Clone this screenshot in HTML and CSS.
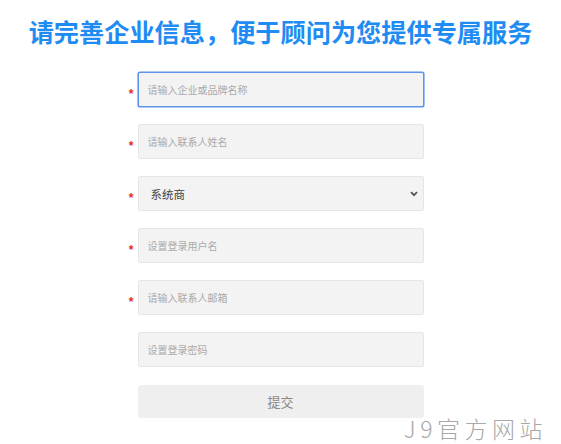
FILE: index.html
```html
<!DOCTYPE html>
<html lang="zh-CN">
<head>
<meta charset="utf-8">
<title>完善企业信息</title>
<link rel="stylesheet" href="styles.css">
</head>
<body>
<div class="page">
  <h1 class="title">请完善企业信息，便于顾问为您提供专属服务</h1>
  <form class="form">
    <span class="star">*</span>
    <input class="field focused" type="text" placeholder="请输入企业或品牌名称">
    <span class="spacer"></span>

    <span class="star">*</span>
    <input class="field" type="text" placeholder="请输入联系人姓名">
    <span class="spacer"></span>

    <span class="star">*</span>
    <div class="select-wrap">
      <select class="field select">
        <option>系统商</option>
      </select>
      <svg class="chevron" width="8" height="6" viewBox="0 0 8 6"><path d="M1 1.2 L4 4.2 L7 1.2" fill="none" stroke="#555" stroke-width="1.8"/></svg>
    </div>
    <span class="spacer"></span>

    <span class="star">*</span>
    <input class="field" type="text" placeholder="设置登录用户名">
    <span class="spacer"></span>

    <span class="star">*</span>
    <input class="field" type="text" placeholder="请输入联系人邮箱">
    <span class="spacer"></span>

    <span class="nostar"></span>
    <input class="field" type="password" placeholder="设置登录密码">
    <span class="spacer"></span>

    <span class="nostar"></span>
    <button class="submit" type="button">提交</button>
    <span class="spacer"></span>
  </form>
  <div class="watermark">J9官方网站</div>
</div>
</body>
</html>
```

FILE: styles.css
```css
html, body {
  margin: 0;
  padding: 0;
  background: #ffffff;
}
body {
  font-family: "Noto Sans CJK SC", "Noto Sans", "DejaVu Sans", sans-serif;
}
.page {
  position: relative;
  width: 561px;
  height: 444px;
  overflow: hidden;
}
.title {
  margin: 0;
  padding-top: 16px;
  height: 30px;
  line-height: 30px;
  text-align: center;
  font-size: 25.2px;
  font-weight: 700;
  color: #1e8cf2;
  letter-spacing: 0;
}
.form {
  margin-top: 26px;
  display: grid;
  grid-template-columns: 1fr 286px 1fr;
  row-gap: 17px;
}
.star {
  justify-self: end;
  align-self: center;
  padding-right: 4px;
  padding-top: 8px;
  color: #e02a2a;
  font-size: 12px;
  line-height: 12px;
  font-family: "Liberation Sans", sans-serif;
  font-weight: 700;
}
.field {
  box-sizing: border-box;
  width: 286px;
  height: 35px;
  margin: 0;
  padding: 0 9px;
  border: 1px solid #e6e6e6;
  border-radius: 2px;
  background: #f3f3f3;
  font-family: "Noto Sans CJK SC", sans-serif;
  font-size: 10px;
  color: #444;
  outline: none;
}
.field::placeholder {
  color: #aaaaaa;
}
.field.focused {
  border: 1px solid #5f92ea;
  box-shadow: 0 0 0 0.6px #5f92ea;
}
.select-wrap {
  position: relative;
  width: 286px;
  height: 35px;
}
.select {
  appearance: none;
  -webkit-appearance: none;
  padding-left: 12px;
  font-size: 11.5px;
  color: #444;
}
.chevron {
  position: absolute;
  right: 6px;
  top: 15px;
  pointer-events: none;
}
.submit {
  box-sizing: border-box;
  width: 286px;
  height: 33px;
  margin-top: 1px;
  border: none;
  border-radius: 3px;
  background: #efefef;
  color: #888;
  font-family: "Noto Sans CJK SC", sans-serif;
  font-size: 13px;
}
.watermark {
  position: absolute;
  right: 14px;
  bottom: 0;
  font-family: "Noto Sans CJK SC", sans-serif;
  font-weight: 300;
  font-size: 23px;
  letter-spacing: 4.5px;
  color: #a8a8a8;
  line-height: 32px;
}
```
